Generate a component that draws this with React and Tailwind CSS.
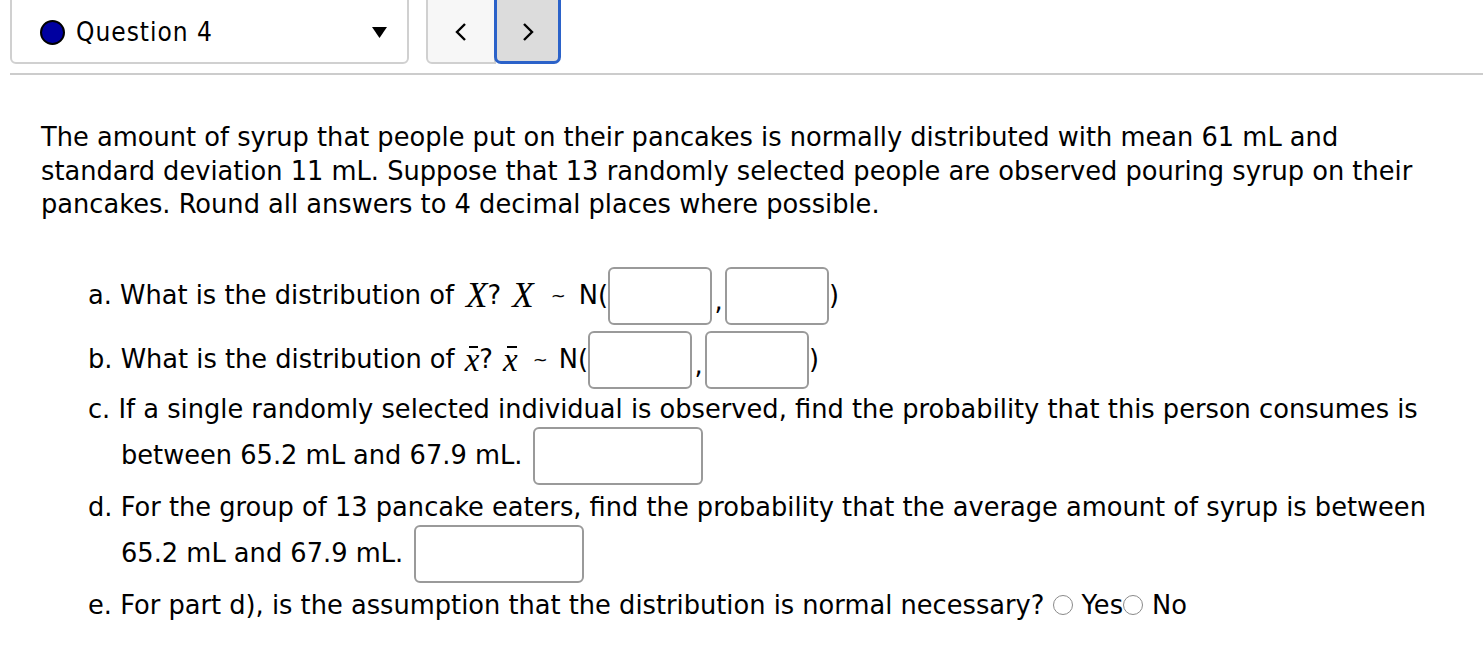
import React from "react";

function Box({ w = "w-[104px]" }) {
  return (
    <input
      type="text"
      className={`${w} h-[58px] shrink-0 rounded-[6px] border-2 border-[#9a9a9a] bg-white outline-none`}
    />
  );
}

function Radio({ label }) {
  return (
    <span className="inline-flex items-center">
      <span className="mr-[9px] block h-[20px] w-[20px] shrink-0 rounded-full border-[1.5px] border-[#8a8a8a] bg-white" />
      <span>{label}</span>
    </span>
  );
}

function MathX({ first }) {
  return (
    <span className={`${first ? "ml-[12px]" : "ml-[3px]"} font-['Liberation_Serif',serif] text-[35px] italic leading-[33px]`}>
      X
    </span>
  );
}

function XBar({ first }) {
  return (
    <span
      className={`${first ? "ml-[10px]" : "ml-[2px]"} relative inline-block font-['Liberation_Serif',serif] text-[33px] italic leading-[24px]`}
    >
      <span className="absolute left-[4px] right-[1px] top-[-2px] h-[2px] bg-black" />
      x
    </span>
  );
}

export default function App() {
  return (
    <div className="min-h-screen bg-white font-['DejaVu_Sans',sans-serif] text-[25.7px] text-black">
      {/* nav */}
      <div className="flex items-start gap-[17px] pl-[10px]">
        <div className="-mt-2 flex h-[72px] w-[399px] items-center rounded-b-[6px] border-2 border-[#d0d0d0] pl-[28px] pr-[20px] pt-2">
          <span className="h-[25px] w-[25px] rounded-full border-[2.5px] border-black bg-[#0000a0]" />
          <span className="ml-[11px] flex-1 font-['DejaVu_Sans_Condensed','DejaVu_Sans',sans-serif] text-[26px] tracking-[1px]">
            Question 4
          </span>
          <svg width="15" height="11" viewBox="0 0 15 11">
            <path d="M0 0 L15 0 L7.5 11 Z" fill="#000" />
          </svg>
        </div>
        <div className="-mt-2 flex h-[72px]">
          <button className="flex w-[70px] items-center justify-center rounded-bl-[6px] border-2 border-[#d0d0d0] bg-[#f7f7f7] pt-2">
            <svg width="14" height="20" viewBox="0 0 14 20">
              <path d="M11 2 L3 10 L11 18" fill="none" stroke="#000" strokeWidth="2.4" />
            </svg>
          </button>
          <button className="-ml-[2px] flex w-[67px] items-center justify-center rounded-[7px] border-[3px] border-[#2b62c9] bg-[#dcdcdc] pt-2">
            <svg width="14" height="20" viewBox="0 0 14 20">
              <path d="M3 2 L11 10 L3 18" fill="none" stroke="#000" strokeWidth="2.4" />
            </svg>
          </button>
        </div>
      </div>
      <div className="ml-[10px] mt-[9px] h-[2px] bg-[#cccccc]" />

      {/* question */}
      <div className="pl-[41px] pt-[46px]">
        <p className="whitespace-nowrap leading-[33.5px]">
          The amount of syrup that people put on their pancakes is normally distributed with mean 61 mL and
          <br />
          standard deviation 11 mL. Suppose that 13 randomly selected people are observed pouring syrup on their
          <br />
          pancakes. Round all answers to 4 decimal places where possible.
        </p>

        <div className="mt-[45px] whitespace-nowrap pl-[47px]">
          <div className="flex items-center leading-[33px]">
            <span>a. What is the distribution of</span>
            <MathX first />
            <span>?&nbsp;</span>
            <MathX />
            <span className="pl-[17px] pr-[13px] text-[18px]">~</span>
            <span>N(</span>
            <Box />
            <span className="w-[13px] pt-3 text-center">,</span>
            <Box />
            <span>)</span>
          </div>
          <div className="mt-[6px] flex items-center leading-[33px]">
            <span>b. What is the distribution of</span>
            <XBar first />
            <span>?&nbsp;</span>
            <XBar />
            <span className="pl-[15px] pr-[11px] text-[18px]">~</span>
            <span>N(</span>
            <Box />
            <span className="w-[13px] pt-3 text-center">,</span>
            <Box />
            <span>)</span>
          </div>
          <div className="mt-[4px] leading-[33px]">
            c. If a single randomly selected individual is observed, find the probability that this person consumes is
          </div>
          <div className="mt-[1px] flex items-center gap-[11px] pl-[33px]">
            <span>between 65.2 mL and 67.9 mL.</span>
            <Box w="w-[170px]" />
          </div>
          <div className="mt-[6px] leading-[33px]">
            d. For the group of 13 pancake eaters, find the probability that the average amount of syrup is between
          </div>
          <div className="mt-[1px] flex items-center gap-[11px] pl-[33px]">
            <span>65.2 mL and 67.9 mL.</span>
            <Box w="w-[170px]" />
          </div>
          <div className="mt-[6px] flex items-center leading-[33px]">
            <span>e. For part d), is the assumption that the distribution is normal necessary?&nbsp;</span>
            <Radio label="Yes" />
            <Radio label="No" />
          </div>
        </div>
      </div>
    </div>
  );
}
